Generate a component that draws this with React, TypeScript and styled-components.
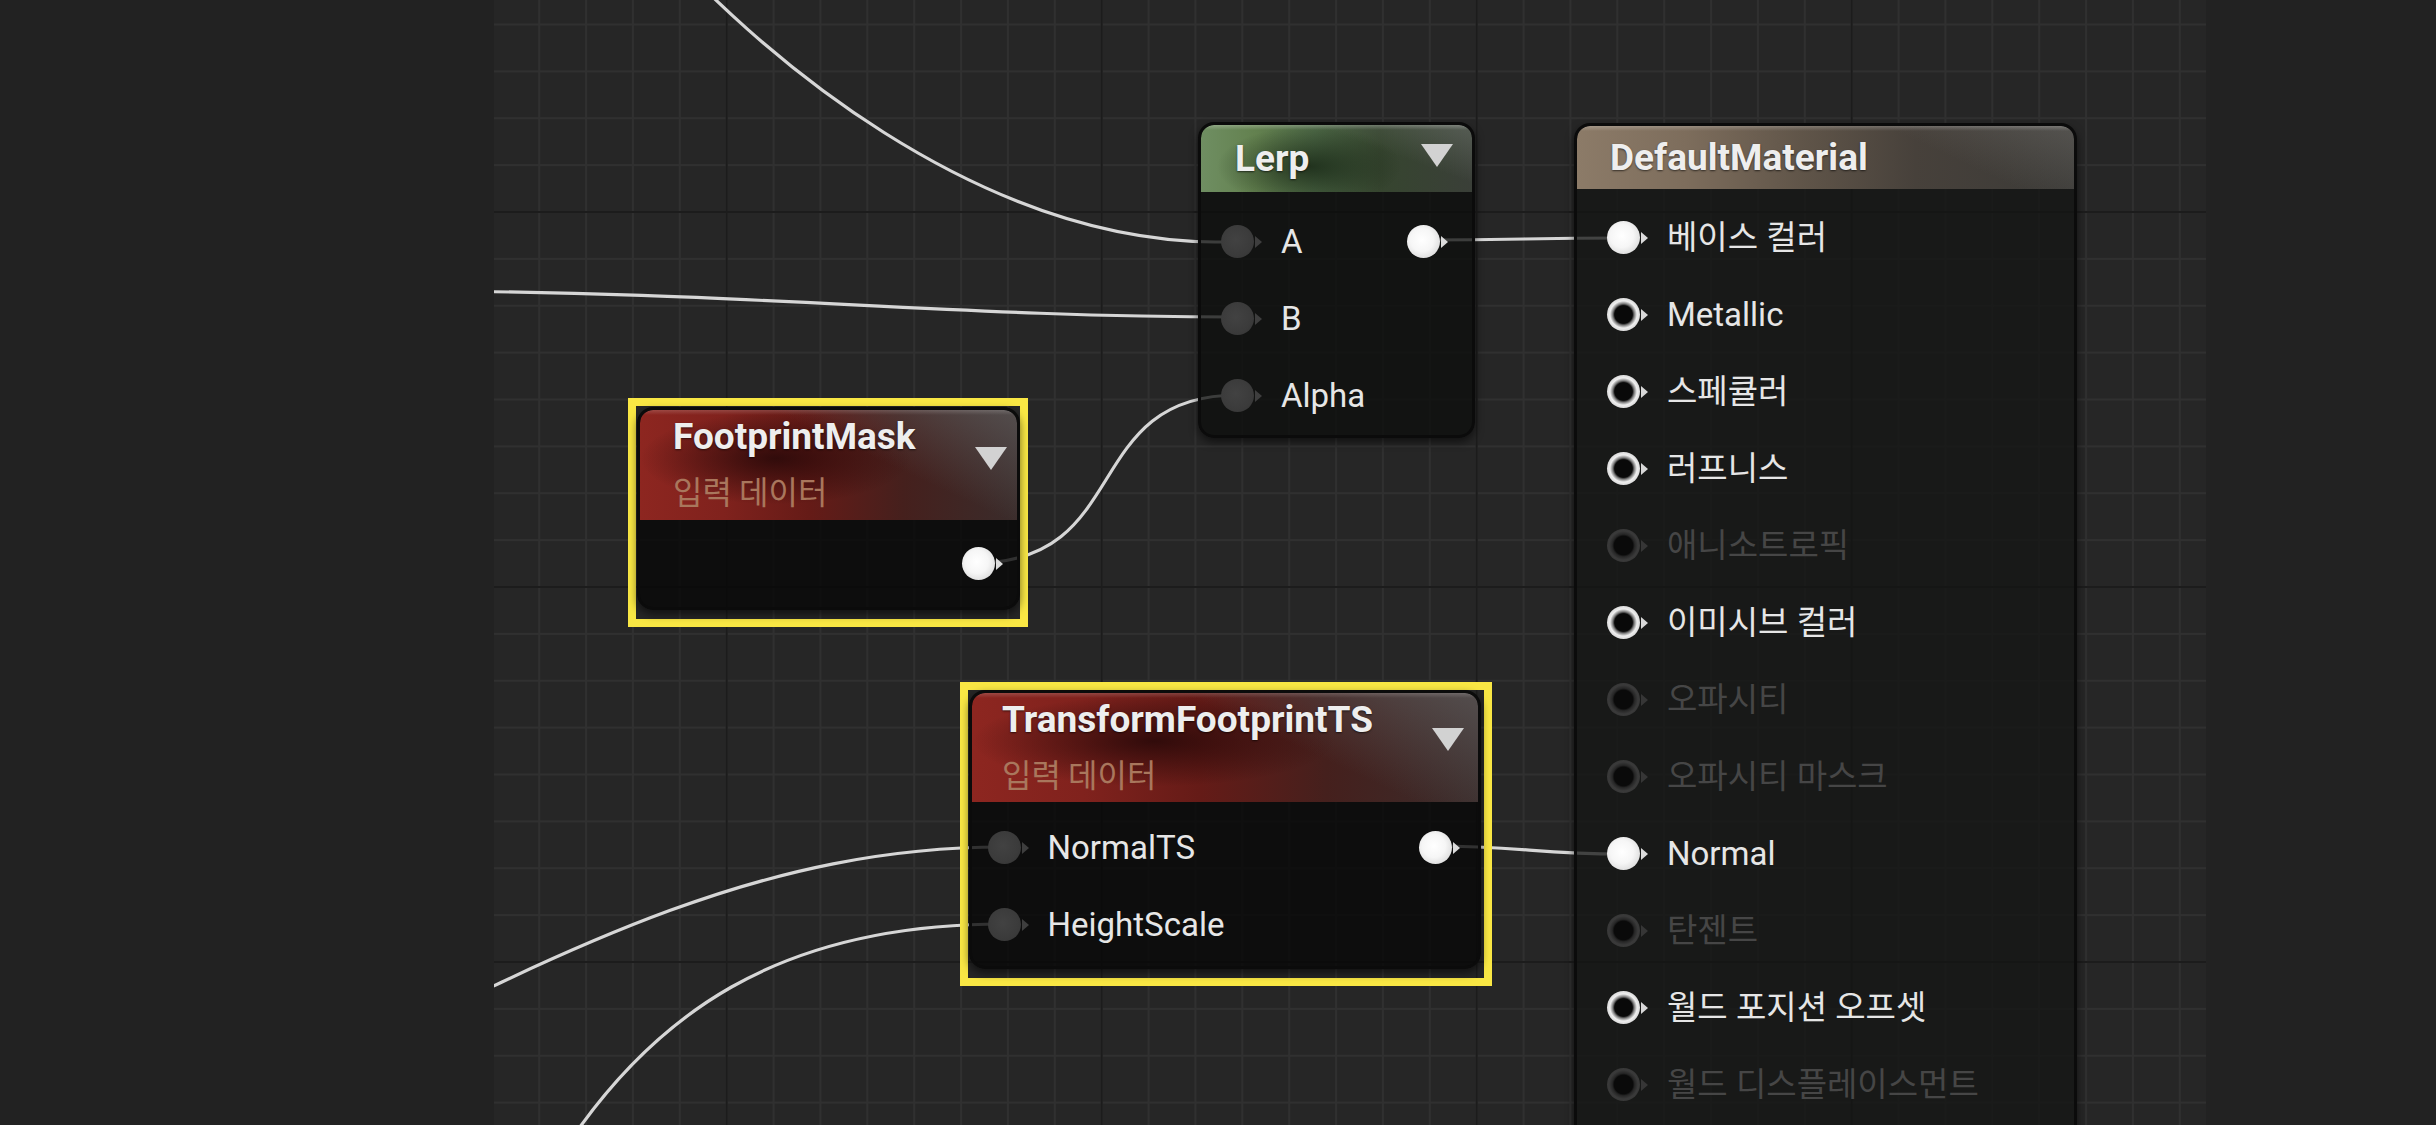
import React from "react";
import styled, { createGlobalStyle, css } from "styled-components";

const GlobalStyle = createGlobalStyle`
  html, body { margin: 0; padding: 0; background: #222222; overflow: hidden; }
  body { font-family: Roboto, "Noto Sans CJK KR", sans-serif; }
  #root { width: 2436px; height: 1125px; }
`;

const Page = styled.div`
  display: flex;
  width: 2436px;
  height: 1125px;
  background: #222222;
`;

const SideBar = styled.div<{ $w: number }>`
  flex: 0 0 ${(p) => p.$w}px;
  height: 100%;
  background: #222222;
`;

const Canvas = styled.div`
  position: relative;
  flex: 0 0 1712px;
  height: 1125px;
  overflow: hidden;
  background-color: #262626;
  background-image:
    linear-gradient(90deg, #1c1c1c 0 2px, transparent 2px),
    linear-gradient(180deg, #1c1c1c 0 2px, transparent 2px),
    linear-gradient(90deg, #303030 0 2px, transparent 2px),
    linear-gradient(180deg, #303030 0 2px, transparent 2px);
  background-size: 375px 375px, 375px 375px, 46.875px 46.875px, 46.875px 46.875px;
  background-position: 231.7px 0, 0 211px, 44.2px 0, 0 23.5px;
`;

const WireLayer = styled.svg`
  position: absolute;
  left: 0;
  top: 0;
  width: 1712px;
  height: 1125px;
  z-index: 0;
  overflow: visible;
`;

const Wire = styled.path`
  fill: none;
  stroke: #d6d6d6;
  stroke-width: 3.2;
  stroke-linecap: round;
`;

const Placed = styled.div<{ $x: number; $y: number }>`
  position: absolute;
  left: ${(p) => p.$x}px;
  top: ${(p) => p.$y}px;
  z-index: 1;
`;

const Selection = styled.div<{ $x: number; $y: number; $pad: string }>`
  position: absolute;
  left: ${(p) => p.$x}px;
  top: ${(p) => p.$y}px;
  z-index: 1;
  border: 8px solid #f9e744;
  padding: ${(p) => p.$pad};
`;

type Tone = "green" | "red" | "tan";

const bodyColors: Record<Tone, string> = {
  green: "rgba(12, 13, 12, 0.76)",
  tan: "rgba(20, 21, 20, 0.76)",
  red: "rgba(8, 8, 8, 0.8)",
};

const NodeBox = styled.div<{ $tone: Tone; $w: number }>`
  display: flex;
  flex-direction: column;
  width: ${(p) => p.$w}px;
  box-sizing: border-box;
  border: 3px solid #0b0b0b;
  border-radius: 16px;
  background: ${(p) => bodyColors[p.$tone]};
  box-shadow: 0 4px 8px rgba(0, 0, 0, 0.55);
  overflow: hidden;
`;

const headerBg: Record<Tone, ReturnType<typeof css>> = {
  green: css`
    background:
      linear-gradient(180deg, rgba(255, 255, 255, 0.24) 0, rgba(255, 255, 255, 0) 5px),
      linear-gradient(200deg, rgba(110, 118, 108, 0.55) 0%, rgba(110, 118, 108, 0) 35%),
      radial-gradient(ellipse 34% 60% at 40% 62%, rgba(18, 32, 16, 0.75) 0%, rgba(18, 32, 16, 0) 100%),
      linear-gradient(90deg, #6f8e62 0%, #63814f 20%, #4d6846 42%, #36452f 66%, #3a3f38 100%);
  `,
  red: css`
    background:
      linear-gradient(180deg, rgba(255, 255, 255, 0.16) 0, rgba(255, 255, 255, 0) 5px),
      linear-gradient(205deg, rgba(90, 86, 86, 0.8) 0%, rgba(90, 86, 86, 0) 40%),
      radial-gradient(ellipse 36% 42% at 36% 44%, rgba(38, 8, 8, 0.85) 0%, rgba(38, 8, 8, 0) 100%),
      linear-gradient(90deg, #8d2620 0%, #80221d 22%, #651b17 45%, #45201d 70%, #3a2c2b 100%);
  `,
  tan: css`
    background:
      linear-gradient(180deg, rgba(255, 255, 255, 0.22) 0, rgba(255, 255, 255, 0) 5px),
      linear-gradient(205deg, rgba(110, 108, 104, 0.5) 0%, rgba(110, 108, 104, 0) 30%),
      linear-gradient(90deg, #8c7b68 0%, #7d6d5c 22%, #605549 45%, #47413b 68%, #3b3a37 100%);
  `,
};

const Header = styled.div<{ $tone: Tone; $h: number; $pl: number; $pr: number; $align: string }>`
  display: flex;
  align-items: ${(p) => p.$align};
  justify-content: space-between;
  box-sizing: border-box;
  height: ${(p) => p.$h}px;
  padding: 0 ${(p) => p.$pr}px 0 ${(p) => p.$pl}px;
  border-radius: 13px 13px 0 0;
  ${(p) => headerBg[p.$tone]}
`;

const TitleBlock = styled.div`
  display: flex;
  flex-direction: column;
  padding-top: 5px;
`;

const Title = styled.div`
  font-family: Roboto, "Noto Sans CJK KR", sans-serif;
  font-weight: 700;
  font-size: 37px;
  line-height: 44px;
  color: #eeeeee;
  text-shadow: 0 1px 2px rgba(0, 0, 0, 0.6);
  white-space: nowrap;
`;

const Subtitle = styled.div`
  font-family: "Noto Sans CJK KR", Roboto, sans-serif;
  font-size: 32px;
  line-height: 40px;
  margin-top: 11px;
  color: #a9775d;
  white-space: nowrap;
`;

const Dropdown = styled.svg<{ $mt: number }>`
  flex: 0 0 auto;
  width: 32px;
  height: 23px;
  margin-top: ${(p) => p.$mt}px;
`;

const Body = styled.div<{ $pad: string }>`
  display: flex;
  flex-direction: column;
  padding: ${(p) => p.$pad};
`;

const Row = styled.div`
  display: flex;
  align-items: center;
  justify-content: space-between;
  height: 77px;
`;

const PinLabel = styled.div`
  display: flex;
  align-items: center;
  gap: 19px;
`;

const Label = styled.span<{ $dim?: boolean }>`
  font-family: Roboto, "Noto Sans CJK KR", sans-serif;
  font-size: 33px;
  line-height: 40px;
  color: ${(p) => (p.$dim ? "#464646" : "#e6e6e6")};
  white-space: nowrap;
`;

type PinKind = "grey" | "white" | "ring" | "dim";

const dotBg: Record<PinKind, string> = {
  grey: "radial-gradient(circle at 45% 45%, #424242 0%, #3b3b3b 60%, #333333 100%)",
  white:
    "radial-gradient(circle at 45% 45%, #ffffff 0%, #f6f6f6 45%, #dcdcdc 78%, #a8a8a8 100%)",
  ring: "radial-gradient(circle, #090909 0 38%, #7a7a7a 46%, #efefef 58%, #d2d2d2 76%, #8a8a8a 100%)",
  dim: "radial-gradient(circle, #0a0a0a 0 40%, #262626 48%, #3a3a3a 62%, #353535 80%, #262626 100%)",
};

const arrowColor: Record<PinKind, string> = {
  grey: "#3e3e3e",
  white: "#dcdcdc",
  ring: "#d8d8d8",
  dim: "#363636",
};

const PinWrap = styled.span`
  display: inline-flex;
  align-items: center;
`;

const PinDot = styled.span<{ $kind: PinKind }>`
  width: 33px;
  height: 33px;
  border-radius: 50%;
  background: ${(p) => dotBg[p.$kind]};
`;

const PinArrow = styled.span<{ $kind: PinKind }>`
  width: 0;
  height: 0;
  margin-left: 1px;
  border-top: 6px solid transparent;
  border-bottom: 6px solid transparent;
  border-left: 7px solid ${(p) => arrowColor[p.$kind]};
`;

const Pin = ({ kind }: { kind: PinKind }) => (
  <PinWrap>
    <PinDot $kind={kind} />
    <PinArrow $kind={kind} />
  </PinWrap>
);

const Triangle = ({ mt }: { mt: number }) => (
  <Dropdown $mt={mt} viewBox="0 0 32 23">
    <polygon points="0,0 32,0 16,23" fill="#d2d2d2" />
  </Dropdown>
);

type InputRow = { label: string; kind: PinKind; dim?: boolean; out?: PinKind };

const Inputs = ({ rows }: { rows: InputRow[] }) => (
  <>
    {rows.map((r) => (
      <Row key={r.label}>
        <PinLabel>
          <Pin kind={r.kind} />
          <Label $dim={r.dim}>{r.label}</Label>
        </PinLabel>
        {r.out ? <Pin kind={r.out} /> : null}
      </Row>
    ))}
  </>
);

const materialRows: InputRow[] = [
  { label: "베이스 컬러", kind: "white" },
  { label: "Metallic", kind: "ring" },
  { label: "스페큘러", kind: "ring" },
  { label: "러프니스", kind: "ring" },
  { label: "애니소트로픽", kind: "dim", dim: true },
  { label: "이미시브 컬러", kind: "ring" },
  { label: "오파시티", kind: "dim", dim: true },
  { label: "오파시티 마스크", kind: "dim", dim: true },
  { label: "Normal", kind: "white" },
  { label: "탄젠트", kind: "dim", dim: true },
  { label: "월드 포지션 오프셋", kind: "ring" },
  { label: "월드 디스플레이스먼트", kind: "dim", dim: true },
];

export default function App() {
  return (
    <>
      <GlobalStyle />
      <Page>
        <SideBar $w={494} />
        <Canvas>
          <WireLayer viewBox="0 0 1712 1125">
            <Wire d="M146,-80 C266,60 486,240 721,242 L744,242" />
            <Wire d="M-100,291 C250,291 450,317 744,317" />
            <Wire d="M481,563 C640,563 585,395 744,395" />
            <Wire d="M928,240 C1030,240 1030,238 1130,238" />
            <Wire d="M938,846 C1030,846 1040,854 1130,854" />
            <Wire d="M-250,1110 C50,960 250,847 510,847" />
            <Wire d="M40,1200 C150,1000 300,924 510,924" />
          </WireLayer>

          <Placed $x={704} $y={122}>
            <NodeBox $tone="green" $w={277}>
              <Header $tone="green" $h={67} $pl={34} $pr={19} $align="center">
                <Title>Lerp</Title>
                <Triangle mt={-6} />
              </Header>
              <Body $pad="11px 24px 1px 20px">
                <Inputs
                  rows={[
                    { label: "A", kind: "grey", out: "white" },
                    { label: "B", kind: "grey" },
                    { label: "Alpha", kind: "grey" },
                  ]}
                />
              </Body>
            </NodeBox>
          </Placed>

          <Placed $x={1080} $y={123}>
            <NodeBox $tone="tan" $w={503}>
              <Header $tone="tan" $h={63} $pl={33} $pr={20} $align="center">
                <Title>DefaultMaterial</Title>
              </Header>
              <Body $pad="10px 20px 80px 30px">
                <Inputs rows={materialRows} />
              </Body>
            </NodeBox>
          </Placed>

          <Selection $x={134} $y={398} $pad="1px 0 9px 1px">
            <NodeBox $tone="red" $w={383}>
              <Header $tone="red" $h={110} $pl={33} $pr={10} $align="flex-start">
                <TitleBlock>
                  <Title>FootprintMask</Title>
                  <Subtitle>입력 데이터</Subtitle>
                </TitleBlock>
                <Triangle mt={37} />
              </Header>
              <Body $pad="5px 14px 5px 20px">
                <Row>
                  <span />
                  <Pin kind="white" />
                </Row>
              </Body>
            </NodeBox>
          </Selection>

          <Selection $x={466} $y={682} $pad="0 3px 9px 1px">
            <NodeBox $tone="red" $w={512}>
              <Header $tone="red" $h={109} $pl={30} $pr={14} $align="flex-start">
                <TitleBlock>
                  <Title>TransformFootprintTS</Title>
                  <Subtitle>입력 데이터</Subtitle>
                </TitleBlock>
                <Triangle mt={35} />
              </Header>
              <Body $pad="7px 18px 3px 15.5px">
                <Inputs
                  rows={[
                    { label: "NormalTS", kind: "grey", out: "white" },
                    { label: "HeightScale", kind: "grey" },
                  ]}
                />
              </Body>
            </NodeBox>
          </Selection>
        </Canvas>
        <SideBar $w={230} />
      </Page>
    </>
  );
}
